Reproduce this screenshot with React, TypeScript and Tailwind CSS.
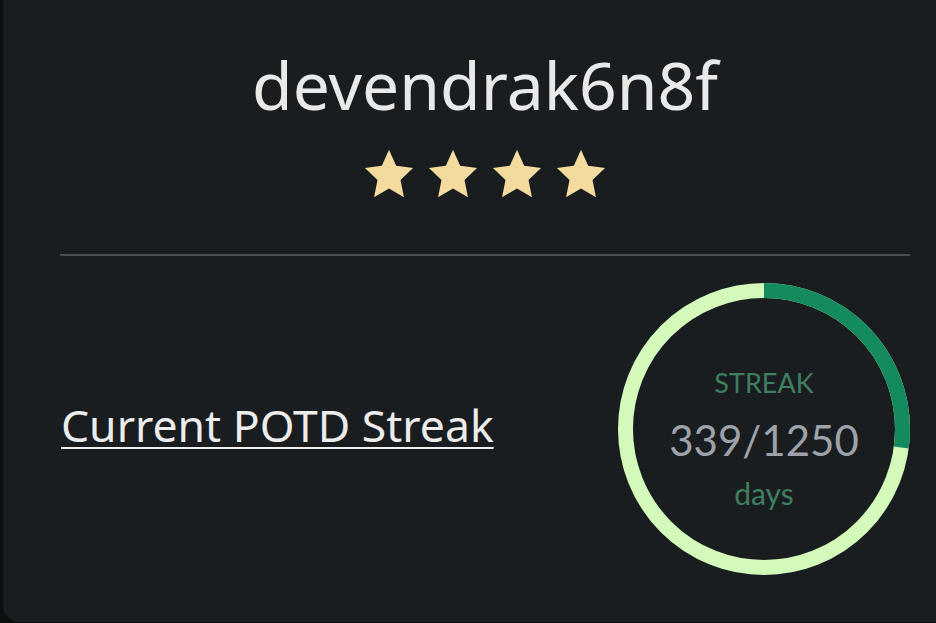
import React from "react";

const Star = () => (
  <svg width="52" height="52" viewBox="0 0 24 23" preserveAspectRatio="none" className="block">
    <path
      d="M12 0.8l3.3 7.1 7.8.9-5.8 5.3 1.6 7.7L12 17.9l-6.9 3.9 1.6-7.7L.9 8.8l7.8-.9z"
      fill="#f5dc9e"
    />
  </svg>
);

const Ring = () => {
  const size = 292;
  const stroke = 15;
  const r = (size - stroke) / 2;
  const c = 2 * Math.PI * r;
  const pct = 339 / 1250;
  return (
    <div className="relative w-[292px] h-[292px]">
      <svg width={size} height={size} className="block -rotate-90">
        <circle cx={size / 2} cy={size / 2} r={r} fill="none" stroke="#d3fabb" strokeWidth={stroke} />
        <circle
          cx={size / 2}
          cy={size / 2}
          r={r}
          fill="none"
          stroke="#148a5f"
          strokeWidth={stroke}
          strokeDasharray={`${c * pct} ${c}`}
        />
      </svg>
      <div className="absolute inset-0 flex flex-col items-center pt-[86px] font-['Lato',sans-serif]">
        <div className="text-[27px] leading-none text-[#3e7f5f]">STREAK</div>
        <div className="text-[42px] leading-none text-[#9ea3ab] mt-[23px]">339/1250</div>
        <div className="text-[30px] leading-none text-[#3e7f5f] mt-[17px]">days</div>
      </div>
    </div>
  );
};

export default function App() {
  return (
    <div className="w-[936px] h-[623px] bg-[#0b0f10] pl-[3px] pb-[1px] overflow-hidden">
      <div className="h-full bg-[#1a1d20] rounded-bl-[16px] pl-[57px] pr-[26px] pt-[42px] font-['Noto_Sans',sans-serif]">
        <div className="flex flex-col items-center">
          <div className="text-[66px] leading-[84px] text-[#e9e9e9]">devendrak6n8f</div>
          <div className="flex gap-[12px] mt-[22px]">
            <Star />
            <Star />
            <Star />
            <Star />
          </div>
        </div>
        <div className="h-[2px] bg-[#4a4d50] mt-[54px]" />
        <div className="flex items-center justify-between mt-[27px]">
          <a href="#" className="text-[44.5px] leading-[56px] text-[#ececec] underline underline-offset-[5px] decoration-[2px] ml-[1px] mt-[-8px]">
            Current POTD Streak
          </a>
          <Ring />
        </div>
      </div>
    </div>
  );
}
